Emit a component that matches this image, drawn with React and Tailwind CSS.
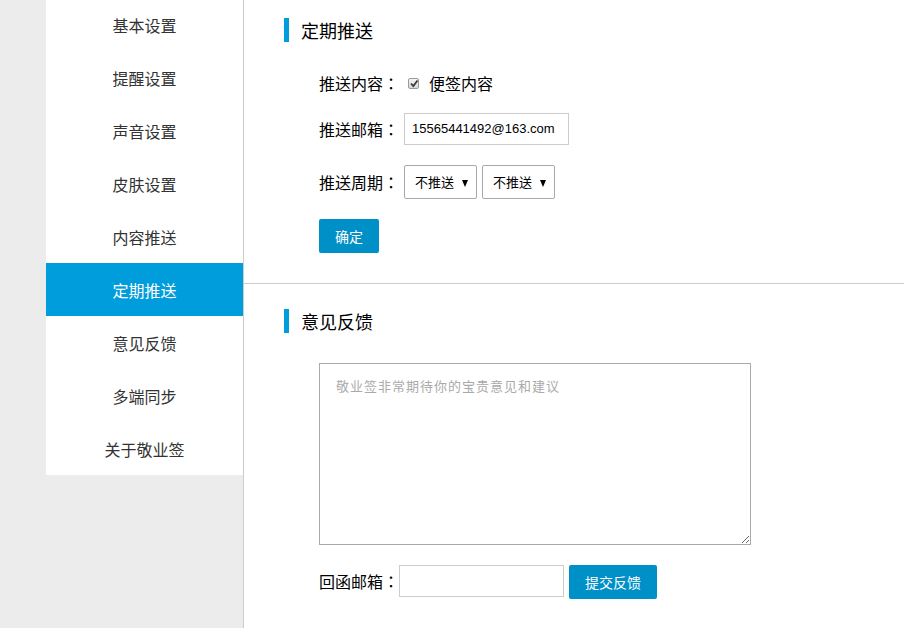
import React from "react";

const font = { fontFamily: '"Noto Sans CJK SC", "Liberation Sans", sans-serif' };
const jp = { fontFamily: '"Noto Sans CJK JP", sans-serif' };

const items = ["基本设置", "提醒设置", "声音设置", "皮肤设置", "内容推送", "定期推送", "意见反馈", "多端同步", "关于敬业签"];

function Label({ text, w }) {
  return (
    <span className={"shrink-0 whitespace-nowrap " + w}>
      {text}
      <span style={jp}>：</span>
    </span>
  );
}

function Select() {
  return (
    <div className="relative flex h-[34px] w-[73px] items-center border border-[#a9a9a9] bg-white pl-[10px] text-[13px] text-black rounded-[2px]">
      <span>不推送</span>
      <span className="absolute right-[8px] top-[14px] h-0 w-0 border-l-[3.5px] border-r-[3.5px] border-t-[7px] border-l-transparent border-r-transparent border-t-black" />
    </div>
  );
}

export default function App() {
  return (
    <div className="flex h-[628px] w-[904px] overflow-hidden bg-[#ececec]" style={font}>
      <div className="ml-[46px] w-[197px] self-start">
        <div className="-mt-[2px] bg-white">
          {items.map((t, i) => (
            <div
              key={t}
              className={
                "flex h-[53px] items-center justify-center text-[16px] " +
                (i === 5 ? "bg-[#009ddc] text-white" : "text-[#333]")
              }
            >
              {t}
            </div>
          ))}
        </div>
      </div>
      <div className="flex-1 border-l border-[#cccccc] bg-white">
        <div className="pt-[18px]">
          <div className="flex h-[24px] items-center pl-[40px]">
            <div className="h-[24px] w-[5px] bg-[#009ddc]" />
            <div className="ml-[12px] text-[18px] text-black">定期推送</div>
          </div>
          <div className="pl-[75px] text-[16px] text-black">
            <div className="mt-[25px] flex h-[32px] items-center">
              <Label text="推送内容" w="w-[89px]" />
              <span className="relative h-[11px] w-[11px] rounded-[2px] border border-[#9a9a9a] bg-gradient-to-b from-[#f4f4f4] to-[#d8d8d8]">
                <svg viewBox="0 0 11 11" className="absolute left-[0px] top-[-1px] h-[11px] w-[11px]">
                  <path d="M2 5.5 L4.3 8 L8.5 2.5" fill="none" stroke="#3a3a3a" strokeWidth="1.8" />
                </svg>
              </span>
              <span className="ml-[10px]">便签内容</span>
            </div>
            <div className="mt-[14px] flex h-[32px] items-center">
              <Label text="推送邮箱" w="w-[85px]" />
              <div className="flex h-[32px] w-[165px] items-center border border-[#cccccc] pl-[7px] text-[13px]" style={{ fontFamily: '"Liberation Sans", sans-serif' }}>
                15565441492@163.com
              </div>
            </div>
            <div className="mt-[20px] flex h-[34px] items-center">
              <Label text="推送周期" w="w-[85px]" />
              <Select />
              <div className="ml-[5px]">
                <Select />
              </div>
            </div>
            <button className="mt-[20px] flex h-[34px] w-[60px] items-center justify-center rounded-[2px] bg-[#0090c8] text-[14px] text-white">
              确定
            </button>
          </div>
          <div className="mt-[30px] h-px bg-[#cccccc]" />
          <div className="mt-[25px] flex h-[24px] items-center pl-[40px]">
            <div className="h-[24px] w-[5px] bg-[#009ddc]" />
            <div className="ml-[12px] text-[18px] text-black">意见反馈</div>
          </div>
          <div className="pl-[75px] text-[16px] text-black">
            <textarea
              className="mt-[30px] block h-[182px] w-[432px] border border-[#aaaaaa] px-[16px] py-[12px] text-[13px] tracking-[1px] text-[#333] placeholder:text-[#aaaaaa] outline-none"
              style={font}
              placeholder="敬业签非常期待你的宝贵意见和建议"
            />
            <div className="mt-[20px] flex h-[34px] items-start">
              <div className="flex h-[32px] items-center">
                <Label text="回函邮箱" w="w-[80px]" />
              </div>
              <div className="h-[32px] w-[165px] border border-[#cccccc]" />
              <button className="ml-[5px] flex h-[34px] w-[88px] items-center justify-center rounded-[2px] bg-[#0090c8] text-[14px] text-white">
                提交反馈
              </button>
            </div>
          </div>
        </div>
      </div>
    </div>
  );
}
